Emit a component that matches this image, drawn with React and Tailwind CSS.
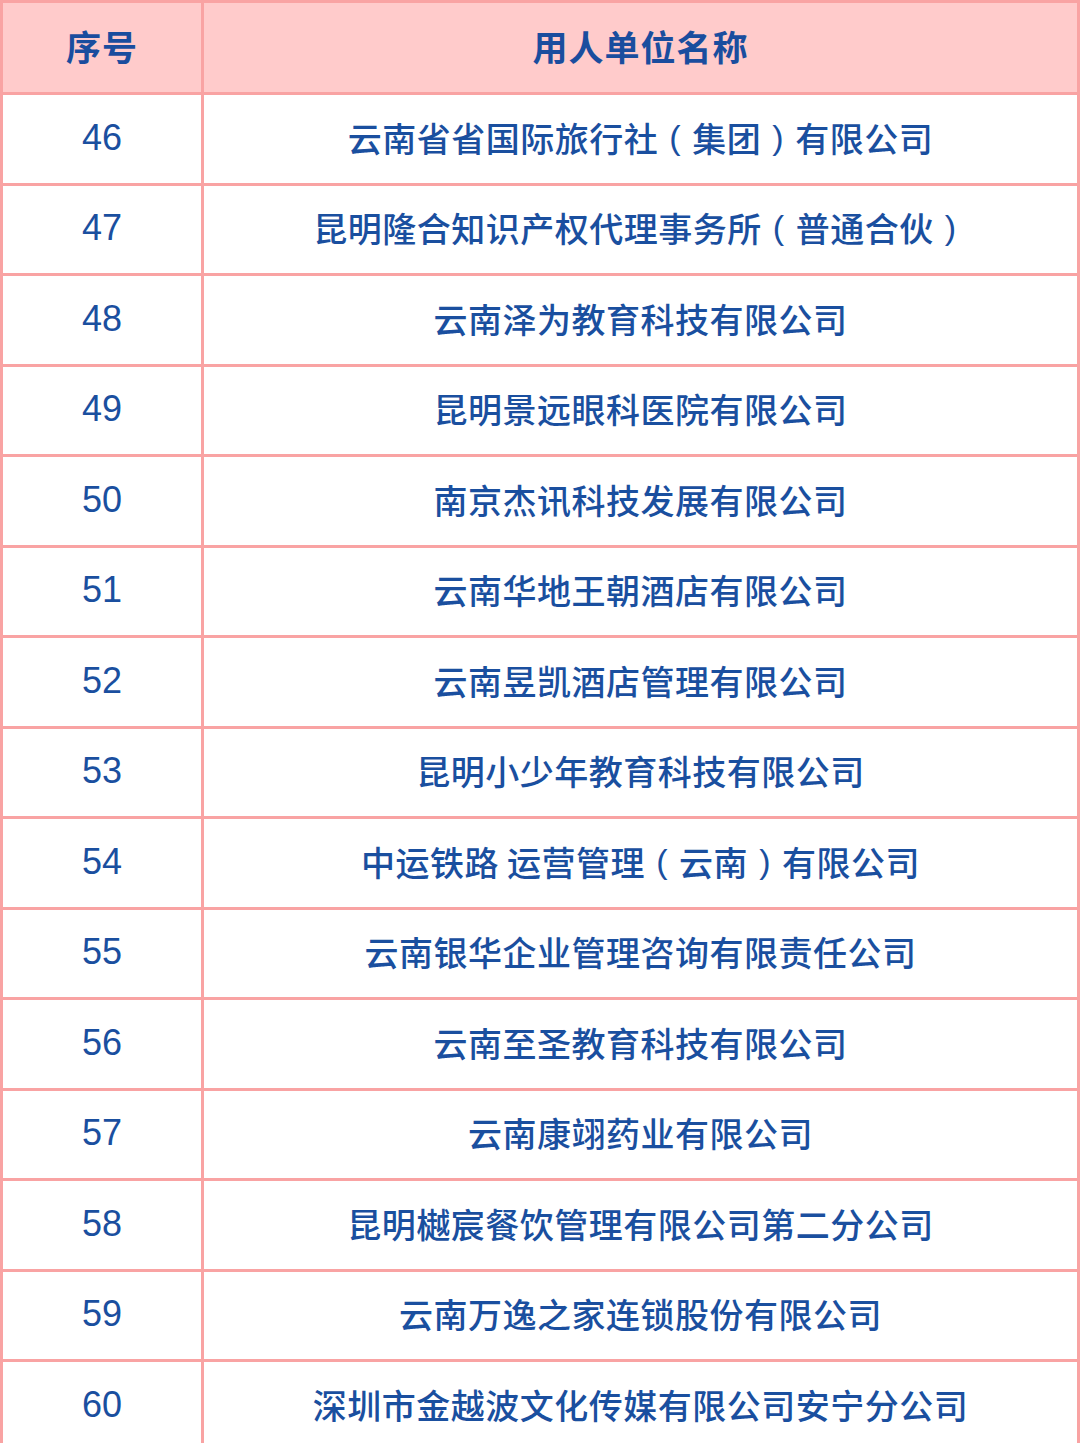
const rows = [
  ['46', '云南省省国际旅行社（集团）有限公司'],
  ['47', '昆明隆合知识产权代理事务所（普通合伙）'],
  ['48', '云南泽为教育科技有限公司'],
  ['49', '昆明景远眼科医院有限公司'],
  ['50', '南京杰讯科技发展有限公司'],
  ['51', '云南华地王朝酒店有限公司'],
  ['52', '云南昱凯酒店管理有限公司'],
  ['53', '昆明小少年教育科技有限公司'],
  ['54', '中运铁路 运营管理（云南）有限公司'],
  ['55', '云南银华企业管理咨询有限责任公司'],
  ['56', '云南至圣教育科技有限公司'],
  ['57', '云南康翊药业有限公司'],
  ['58', '昆明樾宸餐饮管理有限公司第二分公司'],
  ['59', '云南万逸之家连锁股份有限公司'],
  ['60', '深圳市金越波文化传媒有限公司安宁分公司'],
];

// full-width brackets drawn centred in their em box, like the source font
function Name({ text }) {
  const parts = text.split(/([（）])/);
  return parts.map((p, i) => {
    if (p === '（' || p === '）') {
      return (
        <span
          key={i}
          className="inline-block w-[1em] text-center font-normal"
          style={{ fontFamily: '"Liberation Sans", sans-serif' }}
        >
          {p === '（' ? '(' : ')'}
        </span>
      );
    }
    return <span key={i}>{p}</span>;
  });
}

export default function App() {
  return (
    <div
      className="w-[1080px] h-[1443px] overflow-hidden bg-white"
      style={{ fontFamily: '"Noto Sans CJK SC", "Noto Sans", sans-serif' }}
    >
      <div className="border-x-[3px] border-t-[3px] border-[#f9a3a3]">
        <div className="flex h-[92px] border-b-[3px] border-[#f9a3a3] bg-[#ffcbcb] text-[#1a4d9e]">
          <div className="flex w-[201px] items-center justify-center border-r-[3px] border-[#f9a3a3] pb-[3px] text-[35px] font-bold tracking-[1px]">
            序号
          </div>
          <div className="flex flex-1 items-center justify-center pb-[3px] text-[35px] font-bold tracking-[1px]">
            用人单位名称
          </div>
        </div>
        {rows.map(([num, name]) => (
          <div key={num} className="flex h-[90.5px] border-b-[3px] border-[#f9a3a3] text-[#1a4f9f]">
            <div
              className="flex w-[201px] items-center justify-center border-r-[3px] border-[#f9a3a3] pb-[2px] text-[36px]"
              style={{ fontFamily: '"Liberation Sans", sans-serif' }}
            >
              {num}
            </div>
            <div className="flex flex-1 items-center justify-center pb-[3px] text-[34px] font-medium tracking-[0.5px]">
              <Name text={name} />
            </div>
          </div>
        ))}
      </div>
    </div>
  );
}
